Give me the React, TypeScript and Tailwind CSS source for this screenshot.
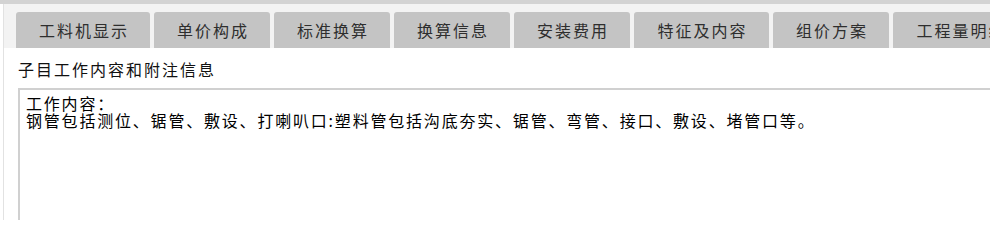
import React from "react";

const tabs: { label: string; w: string }[] = [
  { label: "工料机显示", w: "w-[134px]" },
  { label: "单价构成", w: "w-[116px]" },
  { label: "标准换算", w: "w-[116px]" },
  { label: "换算信息", w: "w-[116px]" },
  { label: "安装费用", w: "w-[116px]" },
  { label: "特征及内容", w: "w-[135px]" },
  { label: "组价方案", w: "w-[116px]" },
  { label: "工程量明细", w: "w-[135px]" },
];

export default function App() {
  return (
    <div
      className="w-[990px] h-[220px] overflow-hidden bg-white flex flex-col"
      style={{ fontFamily: '"Noto Sans CJK SC", "Noto Sans", sans-serif' }}
    >
      <div className="h-[4px] bg-[#d3d3d3] shrink-0" />
      <div className="flex-1 flex flex-col ml-[3px] border-l border-[#e2e2e2]">
        <div className="h-[44px] shrink-0 bg-[#f3f3f3] pt-[8px] pl-[12px] flex gap-[4px] overflow-hidden">
          {tabs.map((t) => (
            <div
              key={t.label}
              className={`${t.w} shrink-0 h-[36px] rounded-t-[3px] bg-[#c4c4c4] flex items-center justify-center pl-[2px] text-[16px] tracking-[2px] text-[#2e2e2e] whitespace-nowrap`}
            >
              {t.label}
            </div>
          ))}
        </div>
        <div className="flex-1 bg-white flex flex-col pt-[13px]">
          <div className="pl-[14px] text-[16px] leading-[17px] tracking-[2px] text-[#111111] whitespace-nowrap">
            子目工作内容和附注信息
          </div>
          <div className="mt-[10px] ml-[14px] flex-1 border-t-2 border-l-2 border-[#d0d0d0] pl-[6px] pt-[5px] text-[16px] leading-[17px] tracking-[1.8px] text-[#000000] whitespace-nowrap">
            <div>工作内容：</div>
            <div>钢管包括测位、锯管、敷设、打喇叭口:塑料管包括沟底夯实、锯管、弯管、接口、敷设、堵管口等。</div>
          </div>
        </div>
      </div>
    </div>
  );
}
